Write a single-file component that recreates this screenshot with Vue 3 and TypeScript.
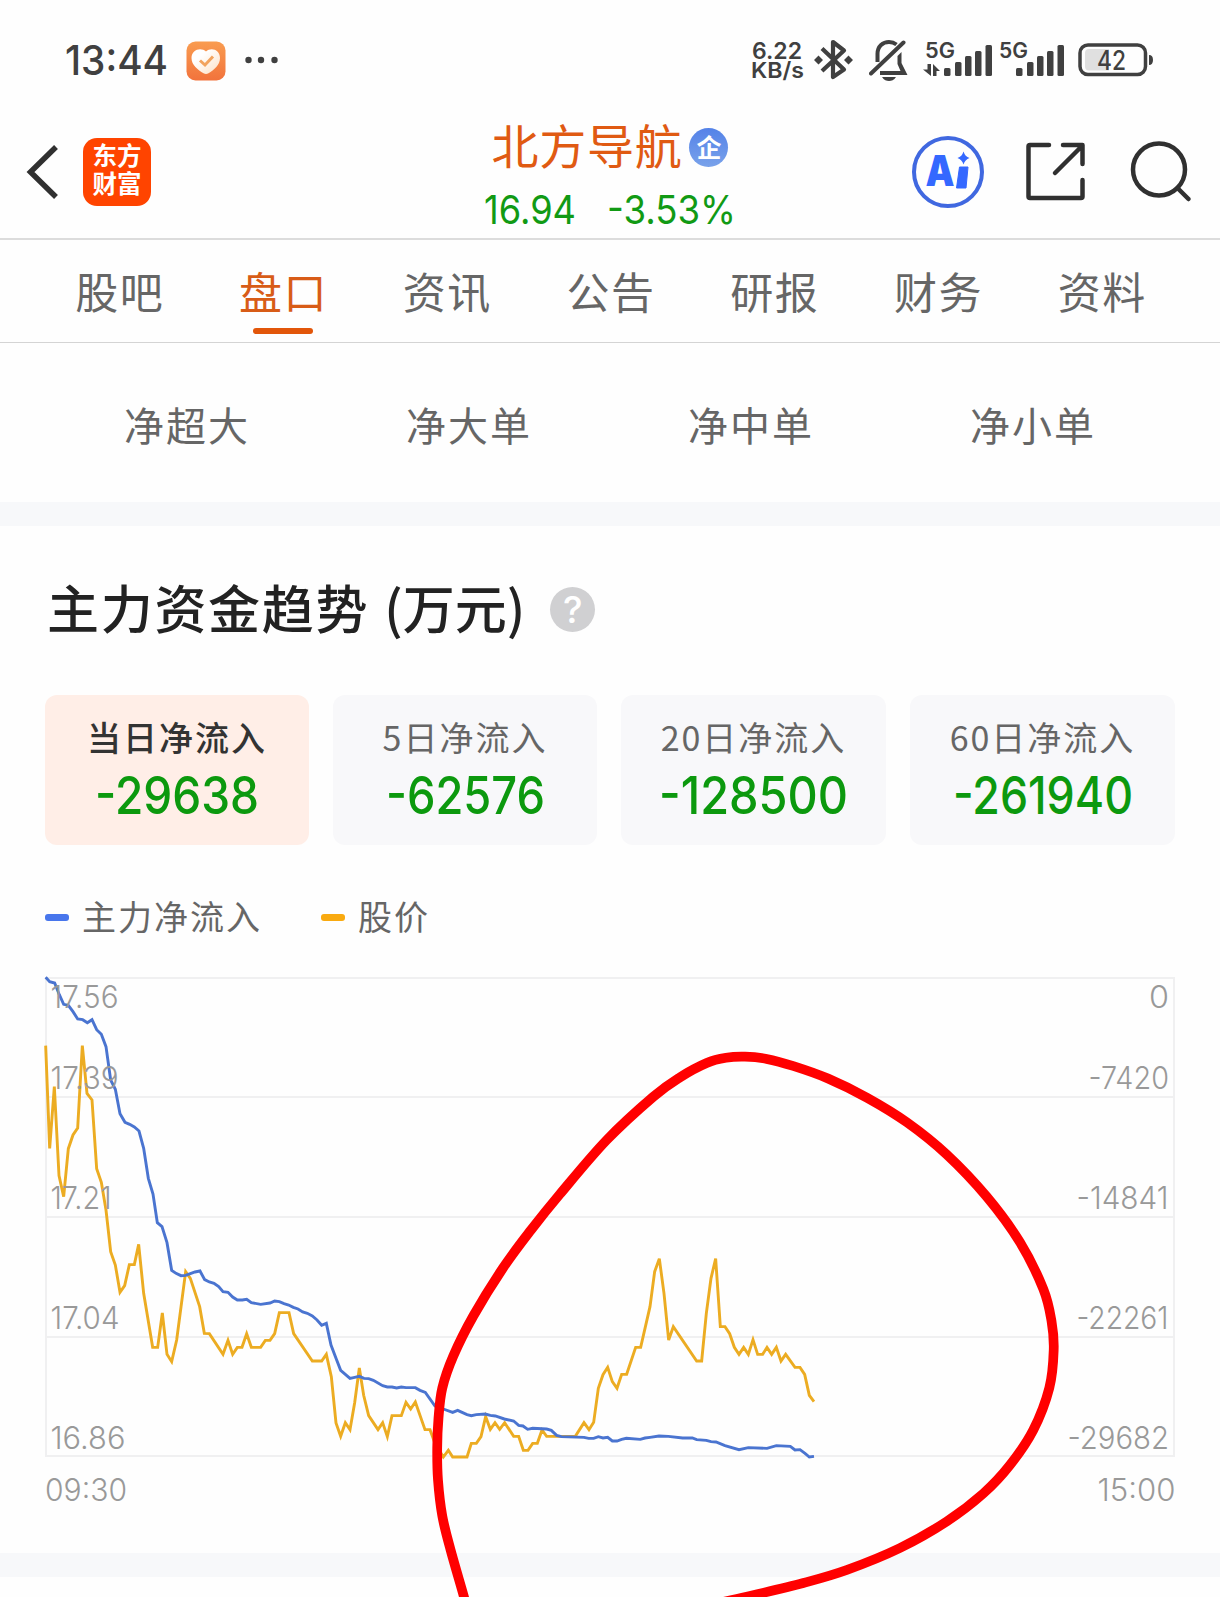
<script setup lang="ts">
interface Tab { label: string; active?: boolean }
interface Card { label: string; value: string; width: number; active?: boolean }
interface AxisLabel { text: string; x: number; y: number; width: number }
type Point = [number, number]

const tabs: Tab[] = [
  { label: '股吧' },
  { label: '盘口', active: true },
  { label: '资讯' },
  { label: '公告' },
  { label: '研报' },
  { label: '财务' },
  { label: '资料' },
]

const orders: string[] = ['净超大', '净大单', '净中单', '净小单']

const cards: Card[] = [
  { label: '当日净流入', value: '-29638', width: 162, active: true },
  { label: '5日净流入', value: '-62576', width: 157 },
  { label: '20日净流入', value: '-128500', width: 187 },
  { label: '60日净流入', value: '-261940', width: 178 },
]

const signalOne: Point[] = [[21, 68], [32, 62], [42, 56], [52, 51], [62.5, 45]]
const signalTwo: Point[] = [[17, 68], [28, 62], [38, 56], [48, 51], [58.5, 45]]

// The plot's local origin is 30px from the left edge; top frame line is at y = 18.
const gridLines: number[] = [18, 137, 257, 377, 496]

const priceAxis: AxisLabel[] = [
  { text: '17.56', x: 20.5, y: 48, width: 68 },
  { text: '17.39', x: 20.5, y: 129, width: 68 },
  { text: '17.21', x: 20.5, y: 249, width: 61 },
  { text: '17.04', x: 20.5, y: 369, width: 69 },
  { text: '16.86', x: 20.5, y: 489, width: 75 },
]

const flowAxis: AxisLabel[] = [
  { text: '0', x: 1119, y: 48, width: 20 },
  { text: '-7420', x: 1058.5, y: 129, width: 80.5 },
  { text: '-14841', x: 1046.5, y: 249, width: 92 },
  { text: '-22261', x: 1046.5, y: 369, width: 92 },
  { text: '-29682', x: 1037.5, y: 489, width: 101.5 },
]

// Series samples, in thirds of a pixel.
const flow = `47,52 59,65 74,69 88,104 101,133 115,136 129,155 143,177 158,179 172,188 186,179 200,209 214,223 228,260
242,360 256,388 270,461 285,487 299,493 313,501 327,513 341,565 355,655 369,702 382,788 396,800 411,848 425,931 438,940
453,947 467,946 481,941 495,936 510,933 524,959 538,966 552,970 566,980 579,995 594,997 608,1011 622,1020 637,1020
650,1018 664,1028 692,1033 720,1029 734,1023 748,1025 762,1031 776,1035 790,1042 804,1047 818,1056 832,1060 847,1068
861,1080 875,1096 889,1090 903,1155 918,1195 932,1231 946,1243 960,1255 974,1252 988,1249 1002,1255 1016,1256 1030,1261
1058,1277 1072,1281 1086,1281 1100,1284 1114,1281 1128,1283 1156,1283 1170,1291 1186,1297 1215,1338 1240,1347 1268,1357
1283,1351 1311,1364 1324,1367 1339,1364 1366,1362 1381,1366 1396,1368 1423,1377 1451,1383 1466,1396 1479,1398 1493,1408
1508,1405 1550,1407 1564,1411 1580,1426 1594,1430 1662,1432 1676,1435 1691,1435 1705,1430 1719,1434 1733,1432 1747,1443
1761,1443 1775,1438 1789,1435 1831,1438 1845,1434 1860,1432 1887,1428 1915,1429 1958,1434 1987,1434 2000,1439 2029,1441
2043,1445 2058,1446 2085,1457 2127,1469 2155,1463 2211,1465 2239,1457 2281,1459 2295,1470 2310,1469 2325,1480 2338,1491
2352,1489`

const price = `47,257 59,565 73,380 87,647 101,710 115,566 129,525 143,504 157,257 171,400 186,420 200,626 214,667 228,750
242,875 256,915 270,997 284,977 298,914 313,914 326,853 341,1000 368,1162 383,1162 397,1059 411,1183 425,1205 440,1140
467,935 481,955 509,1040 523,1120 538,1121 579,1183 594,1141 608,1183 622,1162 636,1162 650,1121 664,1162 692,1162
706,1141 720,1141 734,1121 748,1058 777,1058 791,1121 847,1203 875,1203 889,1183 904,1250 918,1389 932,1429 946,1388
960,1409 974,1328 988,1224 1001,1306 1016,1367 1044,1409 1058,1388 1072,1430 1086,1367 1114,1367 1128,1327 1142,1347
1156,1326 1185,1409 1200,1409 1215,1450 1240,1491 1255,1471 1268,1491 1311,1491 1324,1450 1339,1450 1353,1430 1367,1370
1381,1408 1395,1388 1409,1408 1424,1388 1451,1429 1466,1429 1480,1471 1494,1471 1508,1450 1522,1450 1536,1410 1550,1429
1636,1429 1662,1388 1677,1409 1691,1387 1705,1285 1719,1244 1733,1222 1747,1265 1761,1285 1775,1243 1790,1243 1817,1162
1832,1162 1860,1040 1874,935 1888,896 1902,1000 1916,1140 1930,1100 2000,1203 2015,1203 2029,1060 2043,955 2057,896
2071,1100 2085,1100 2099,1121 2113,1162 2127,1183 2141,1162 2155,1183 2169,1139 2183,1183 2198,1183 2211,1162 2225,1183
2239,1162 2253,1203 2267,1183 2295,1222 2310,1222 2324,1243 2338,1306 2352,1325`

const marker: Point[] = [
  [470, 1620], [464, 1597], [450.6, 1550], [442.3, 1516], [438, 1480], [437.2, 1448], [438.5, 1418], [442.3, 1388],
  [453.3, 1356], [473.3, 1316], [503, 1268], [531, 1230], [560, 1194], [606.7, 1140], [653.3, 1096.7], [680, 1077.3],
  [706.7, 1063], [726, 1057.8], [745, 1056.7], [766.7, 1058.9], [793.3, 1066], [828, 1078.5], [867, 1097.7],
  [907, 1122.4], [946.7, 1154.5], [986.7, 1196.7], [1020, 1242.3], [1043.3, 1289], [1051.500, 1321], [1053.7, 1350],
  [1049.3, 1388], [1033.3, 1430], [1010, 1465], [983.3, 1493.5], [946.7, 1521.5], [900, 1548], [846.7, 1570],
  [803.3, 1583], [746.7, 1596.7], [700, 1607],
]

// Catmull-Rom spline through the points, written as cubic segments.
function smooth(p: Point[]): string {
  let d = `M${p[0][0]} ${p[0][1]}`
  for (let i = 0; i < p.length - 1; i++) {
    const a = p[Math.max(0, i - 1)]
    const b = p[i]
    const c = p[i + 1]
    const e = p[Math.min(p.length - 1, i + 2)]
    d += `C${b[0] + (c[0] - a[0]) / 6} ${b[1] + (c[1] - a[1]) / 6} ${c[0] - (e[0] - b[0]) / 6} ${c[1] - (e[1] - b[1]) / 6} ${c[0]} ${c[1]}`
  }
  return d
}

const markerPath = smooth(marker)
</script>

<template>
  <div class="screen">
    <div class="status">
      <div class="status-left">
        <svg width="108" height="104" class="num semi">
          <text x="2" y="75" font-size="41" textLength="103" lengthAdjust="spacingAndGlyphs">13:44</text>
        </svg>
        <svg width="40" height="40" viewBox="0 0 40 40" class="heart">
          <defs>
            <linearGradient id="heartBg" x1="0" y1="0" x2="0" y2="1">
              <stop offset="0" stop-color="#f99c50" />
              <stop offset="1" stop-color="#f2733c" />
            </linearGradient>
            <linearGradient id="heartFg" x1="0" y1="0" x2="1" y2="1">
              <stop offset="0.3" stop-color="#fff" />
              <stop offset="1" stop-color="#fde0c4" />
            </linearGradient>
          </defs>
          <rect x="0.5" y="0.5" width="39" height="39" rx="9" fill="url(#heartBg)" />
          <path d="M20 10.500C15.500 6 5.500 8 5.500 17C5.500 24 12 29 17.500 32.300Q20 33.800 22.500 32.300C28 29 34 24 34 17C34 8 24.500 6 20 10.500Z" fill="url(#heartFg)" />
          <path d="M14 19.500L19 24L27 15.500" fill="none" stroke="#f2a35e" stroke-width="3" />
        </svg>
        <svg width="34" height="8" class="dots" fill="#404040">
          <circle cx="3.500" cy="4" r="3.200" /><circle cx="16" cy="4" r="3.200" /><circle cx="29.500" cy="4" r="3.200" />
        </svg>
      </div>
      <div class="status-right num bold">
        <svg width="55" height="104">
          <text x="1" y="58.500" font-size="22.500" textLength="50" lengthAdjust="spacingAndGlyphs">6.22</text>
          <text x="0" y="78" font-size="22" textLength="53" lengthAdjust="spacingAndGlyphs">KB/s</text>
        </svg>
        <svg width="39" height="104" class="bt">
          <path d="M8 48.500L30 69.500L19 77V42L30 50.500L8 71" fill="none" stroke="#404040" stroke-width="4.200" stroke-linejoin="round" />
          <path d="M4.500 55.500l4.500 4.500l-4.500 4.500l-4.500-4.500zM34.500 55.500l4.500 4.500l-4.500 4.500l-4.500-4.500z" fill="#404040" />
        </svg>
        <svg width="40" height="104" class="bell">
          <g fill="none" stroke="#404040" stroke-width="4">
            <path d="M8.500 62V54C8.500 46 14 42 20 42C23 42 25.500 43 27.500 44.500" />
            <path d="M2 73.500L34.500 42.500" stroke-linecap="round" />
          </g>
          <path d="M11 71H31.500L28.500 64V56L32.500 52V63L38.500 75H11Z" fill="#404040" />
          <path d="M13 77H27C25 80 22.500 81 20 81S15 80 13 77Z" fill="#404040" />
        </svg>
        <svg width="69" height="104" class="sig" fill="#404040">
          <text x="2" y="58" font-size="21.500" textLength="30" lengthAdjust="spacingAndGlyphs">5G</text>
          <path d="M4.500 64H8V76L0 69.500H4.500ZM10 76H13.500V71H17L10 64Z" />
          <rect v-for="b in signalOne" :key="b[0]" :x="b[0]" :y="b[1]" width="6.500" :height="76 - b[1]" rx="1.500" />
        </svg>
        <svg width="65" height="104" class="sig2" fill="#404040">
          <text x="0" y="58" font-size="21.500" textLength="29" lengthAdjust="spacingAndGlyphs">5G</text>
          <rect v-for="b in signalTwo" :key="b[0]" :x="b[0]" :y="b[1]" width="6.500" :height="76 - b[1]" rx="1.500" />
        </svg>
        <svg width="76" height="104" class="battery">
          <rect x="2" y="45" width="65.500" height="29.500" rx="8" fill="none" stroke="#404040" stroke-width="3.500" />
          <path d="M11 49H31V70.500H11Q7 70.500 7 66.500V53Q7 49 11 49Z" fill="#e0e0e0" />
          <path d="M71 55Q75 55 75 60T71 65Z" fill="#404040" />
          <text x="19" y="69.500" font-size="26.500" font-weight="500" textLength="29" lengthAdjust="spacingAndGlyphs">42</text>
        </svg>
      </div>
    </div>

    <header class="head">
      <div class="head-left">
        <svg width="34" height="60" class="back">
          <path d="M30 5L4.500 30L30 55" fill="none" stroke="#303030" stroke-width="5.500" />
        </svg>
        <div class="logo"><span>东方</span><span>财富</span></div>
      </div>
      <div class="head-mid">
        <div class="stock"><span>北方导航</span><i class="ent">企</i></div>
        <svg width="260" height="56" class="num quote">
          <text x="4" y="41" font-size="40" textLength="92" lengthAdjust="spacingAndGlyphs">16.94</text>
          <text x="127" y="41" font-size="40" textLength="129" lengthAdjust="spacingAndGlyphs">-3.53%</text>
        </svg>
      </div>
      <div class="head-right">
        <svg width="74" height="74" viewBox="0 0 74 74">
          <circle cx="37" cy="37" r="34" fill="none" stroke="#4068e0" stroke-width="4" />
          <text x="14.500" y="50.500" class="ai" font-size="42" textLength="29" lengthAdjust="spacingAndGlyphs">A</text>
          <path d="M48.500 32H57L55 53H45.500Z" fill="#3468ff" stroke="#3468ff" stroke-linejoin="round" />
          <path d="M52.500 16.500Q54 21.500 58.500 23Q54 24.500 52.500 29.500Q51 24.500 46.500 23Q51 21.500 52.500 16.500Z" fill="#3468ff" />
        </svg>
        <svg width="60" height="60" viewBox="0 0 60 60" class="share">
          <g fill="none" stroke="#303030" stroke-width="4.500" stroke-linecap="round" stroke-linejoin="round">
            <path d="M23 3H4Q2.500 3 2.500 4.500V54.500Q2.500 56 4 56H55Q56.500 56 56.500 54.500V38" />
            <path d="M37 3H56.500V22M56 4L29 31" />
          </g>
        </svg>
        <svg width="62" height="62" viewBox="0 0 62 62" class="search">
          <g fill="none" stroke="#303030" stroke-width="4.500" stroke-linecap="round">
            <circle cx="29" cy="28.500" r="26" />
            <path d="M47.500 47L58.500 58" />
          </g>
        </svg>
      </div>
    </header>

    <nav class="tabs">
      <div v-for="t in tabs" :key="t.label" class="tab" :class="{ on: t.active }"><span>{{ t.label }}</span></div>
    </nav>

    <div class="orders">
      <span v-for="o in orders" :key="o">{{ o }}</span>
    </div>
    <div class="band"></div>

    <section class="trend">
      <h2><span>主力资金趋势</span><span class="unit">(万元)</span><i class="help">?</i></h2>
      <div class="cards">
        <div v-for="c in cards" :key="c.label" class="card" :class="{ on: c.active }">
          <span class="label">{{ c.label }}</span>
          <svg :width="c.width + 8" height="64" class="num value">
            <text x="3" y="51" font-size="51.500" :textLength="c.width + 2" lengthAdjust="spacingAndGlyphs">{{ c.value }}</text>
          </svg>
        </div>
      </div>
      <div class="legend">
        <span class="key"><i class="dash blue"></i><span>主力净流入</span></span>
        <span class="key"><i class="dash gold"></i><span>股价</span></span>
      </div>
      <svg class="plot num" width="1160" height="593">
        <g stroke="#f0f0f1" stroke-width="2" fill="none">
          <path v-for="g in gridLines" :key="g" :d="`M15 ${g}H1145`" />
          <path d="M16 18V496M1144 18V496" />
        </g>
        <g transform="scale(0.33333)" fill="none" stroke-width="8.700">
          <polyline :points="price" stroke="#ecac22" />
          <polyline :points="flow" stroke="#4a74d0" />
        </g>
        <g fill="#999" font-size="30.500" class="axis">
          <text v-for="a in priceAxis" :key="a.text" :x="a.x" :y="a.y" :textLength="a.width" lengthAdjust="spacingAndGlyphs">{{ a.text }}</text>
          <text v-for="a in flowAxis" :key="a.text" :x="a.x" :y="a.y" :textLength="a.width" lengthAdjust="spacingAndGlyphs">{{ a.text }}</text>
          <text x="15" y="540.500" textLength="82" lengthAdjust="spacingAndGlyphs">09:30</text>
          <text x="1067.500" y="540.500" textLength="78" lengthAdjust="spacingAndGlyphs">15:00</text>
        </g>
      </svg>
    </section>
    <div class="band"></div>

    <svg class="marker" width="1220" height="1597">
      <path :d="markerPath" fill="none" stroke="#ff0000" stroke-width="9.700" />
    </svg>
  </div>
</template>

<style>
body {
  margin: 0;
  background: #fefefe;
}
</style>

<style scoped>
.screen {
  position: relative;
  width: 1220px;
  height: 1597px;
  overflow: hidden;
  background: #fefefe;
  color: #666;
  font-family: "Noto Sans CJK SC", sans-serif;
}
svg {
  display: block;
  flex: none;
}
i {
  font-style: normal;
}
.num {
  font-family: Inter, "Noto Sans", sans-serif;
  font-feature-settings: "case" 1;
}
.num text {
  white-space: pre;
}
.semi {
  font-weight: 500;
  fill: #404040;
}
.bold {
  font-weight: 600;
  fill: #404040;
}
.axis {
  font-weight: 300;
}
.status {
  display: flex;
  justify-content: space-between;
  height: 104px;
  padding: 0 66px 0 63px;
}
.status-left,
.status-right {
  display: flex;
}
.heart {
  margin: 41px 0 0 15px;
}
.dots {
  margin: 56px 0 0 19px;
}
.bt {
  margin-left: 8px;
}
.bell {
  margin-left: 16px;
}
.sig {
  margin-left: 14px;
}
.sig2 {
  margin-left: 7px;
}
.battery {
  margin-left: 14px;
}
.head {
  display: grid;
  grid-template-columns: 1fr 260px 1fr;
  height: 134px;
  border-bottom: 2px solid #dcdcdc;
}
.head-left,
.head-right {
  display: flex;
  align-items: center;
}
.head-left {
  padding-left: 26px;
}
.logo {
  display: flex;
  flex-direction: column;
  align-items: center;
  justify-content: center;
  box-sizing: border-box;
  width: 68px;
  height: 68px;
  margin-left: 23px;
  padding-bottom: 5px;
  border-radius: 14px;
  background: #ff4400;
  color: #fff;
  font-size: 24.500px;
  font-weight: 700;
  line-height: 28.500px;
}
.head-mid {
  display: flex;
  flex-direction: column;
  align-items: center;
}
.stock {
  display: flex;
  align-items: center;
  height: 56px;
  margin-top: 14px;
  color: #e05a12;
  font-size: 47px;
  letter-spacing: 0.700px;
  line-height: 56px;
  white-space: nowrap;
}
.stock span {
  margin-top: -4px;
}
.ent {
  width: 39px;
  height: 39px;
  margin: 3px 0 0 7px;
  border-radius: 50%;
  background: linear-gradient(#5482e8, #79a2ea);
  color: #fff;
  font-size: 25px;
  font-weight: 700;
  letter-spacing: 0;
  line-height: 36px;
  text-align: center;
}
.quote {
  margin-top: 9px;
  fill: #119a14;
}
.head-right {
  justify-content: flex-end;
  padding-right: 28px;
}
.ai {
  font-family: Inter, sans-serif;
  font-weight: 900;
  fill: #3468ff;
}
.share {
  margin-left: 41px;
}
.search {
  margin-left: 44px;
}
.tabs {
  display: flex;
  height: 102px;
  padding: 0 36px 0 38px;
  border-bottom: 1px solid #d4d4d4;
}
.tab {
  display: flex;
  flex: 1;
  flex-direction: column;
  align-items: center;
  font-size: 43px;
  letter-spacing: 1.500px;
  line-height: 98px;
}
.tab span {
  margin-top: 1px;
}
.tab.on {
  color: #d85c17;
}
.tab.on::after {
  content: "";
  width: 60px;
  height: 6px;
  margin-top: -11px;
  margin-right: 2px;
  border-radius: 3px;
  background: #e2560a;
}
.orders {
  display: flex;
  height: 159px;
  padding: 0 46px;
}
.orders span {
  flex: 1;
  padding-top: 3px;
  font-size: 40px;
  letter-spacing: 2px;
  line-height: 156px;
  text-align: center;
}
.band {
  height: 24px;
  background: #f7f8fa;
}
.trend {
  height: 1027px;
}
h2 {
  display: flex;
  align-items: center;
  height: 166px;
  margin: 0;
  padding-left: 47px;
  color: #222;
  font-size: 52px;
  font-weight: 500;
  letter-spacing: 1.700px;
}
h2 span {
  margin-top: -5px;
}
.unit {
  margin-left: 15px;
  letter-spacing: 0;
}
.help {
  width: 45px;
  height: 45px;
  margin-left: 25px;
  border-radius: 50%;
  background: #d0d0d2;
  color: #fff;
  font: 500 37px/46px Inter, sans-serif;
  letter-spacing: 0;
  text-align: center;
}
.cards {
  display: grid;
  grid-template-columns: 264px 264px 265px 265px;
  gap: 24px;
  height: 150px;
  margin: 3px 45px 0;
}
.card {
  display: flex;
  flex-direction: column;
  align-items: center;
  border-radius: 12px;
  background: #f8f8fa;
}
.label {
  margin-top: 15px;
  font-size: 34px;
  letter-spacing: 2px;
  line-height: 54px;
}
.card.on {
  background: #ffeee7;
}
.card.on .label {
  color: #333;
  font-weight: 500;
}
.value {
  margin-top: -1px;
  fill: #0c990e;
  font-weight: 500;
}
.legend {
  display: flex;
  gap: 59px;
  height: 115px;
  padding: 0 45px;
}
.key {
  display: flex;
  align-items: center;
  height: 144px;
  font-size: 34px;
  letter-spacing: 2px;
}
.key span {
  margin-top: -3px;
}
.dash {
  width: 24px;
  height: 7px;
  margin-right: 13px;
  border-radius: 3px;
}
.blue {
  background: #4876ec;
}
.gold {
  background: #f9aa10;
}
.plot {
  margin-left: 30px;
}
.marker {
  position: absolute;
  top: 0;
  left: 0;
}
</style>
